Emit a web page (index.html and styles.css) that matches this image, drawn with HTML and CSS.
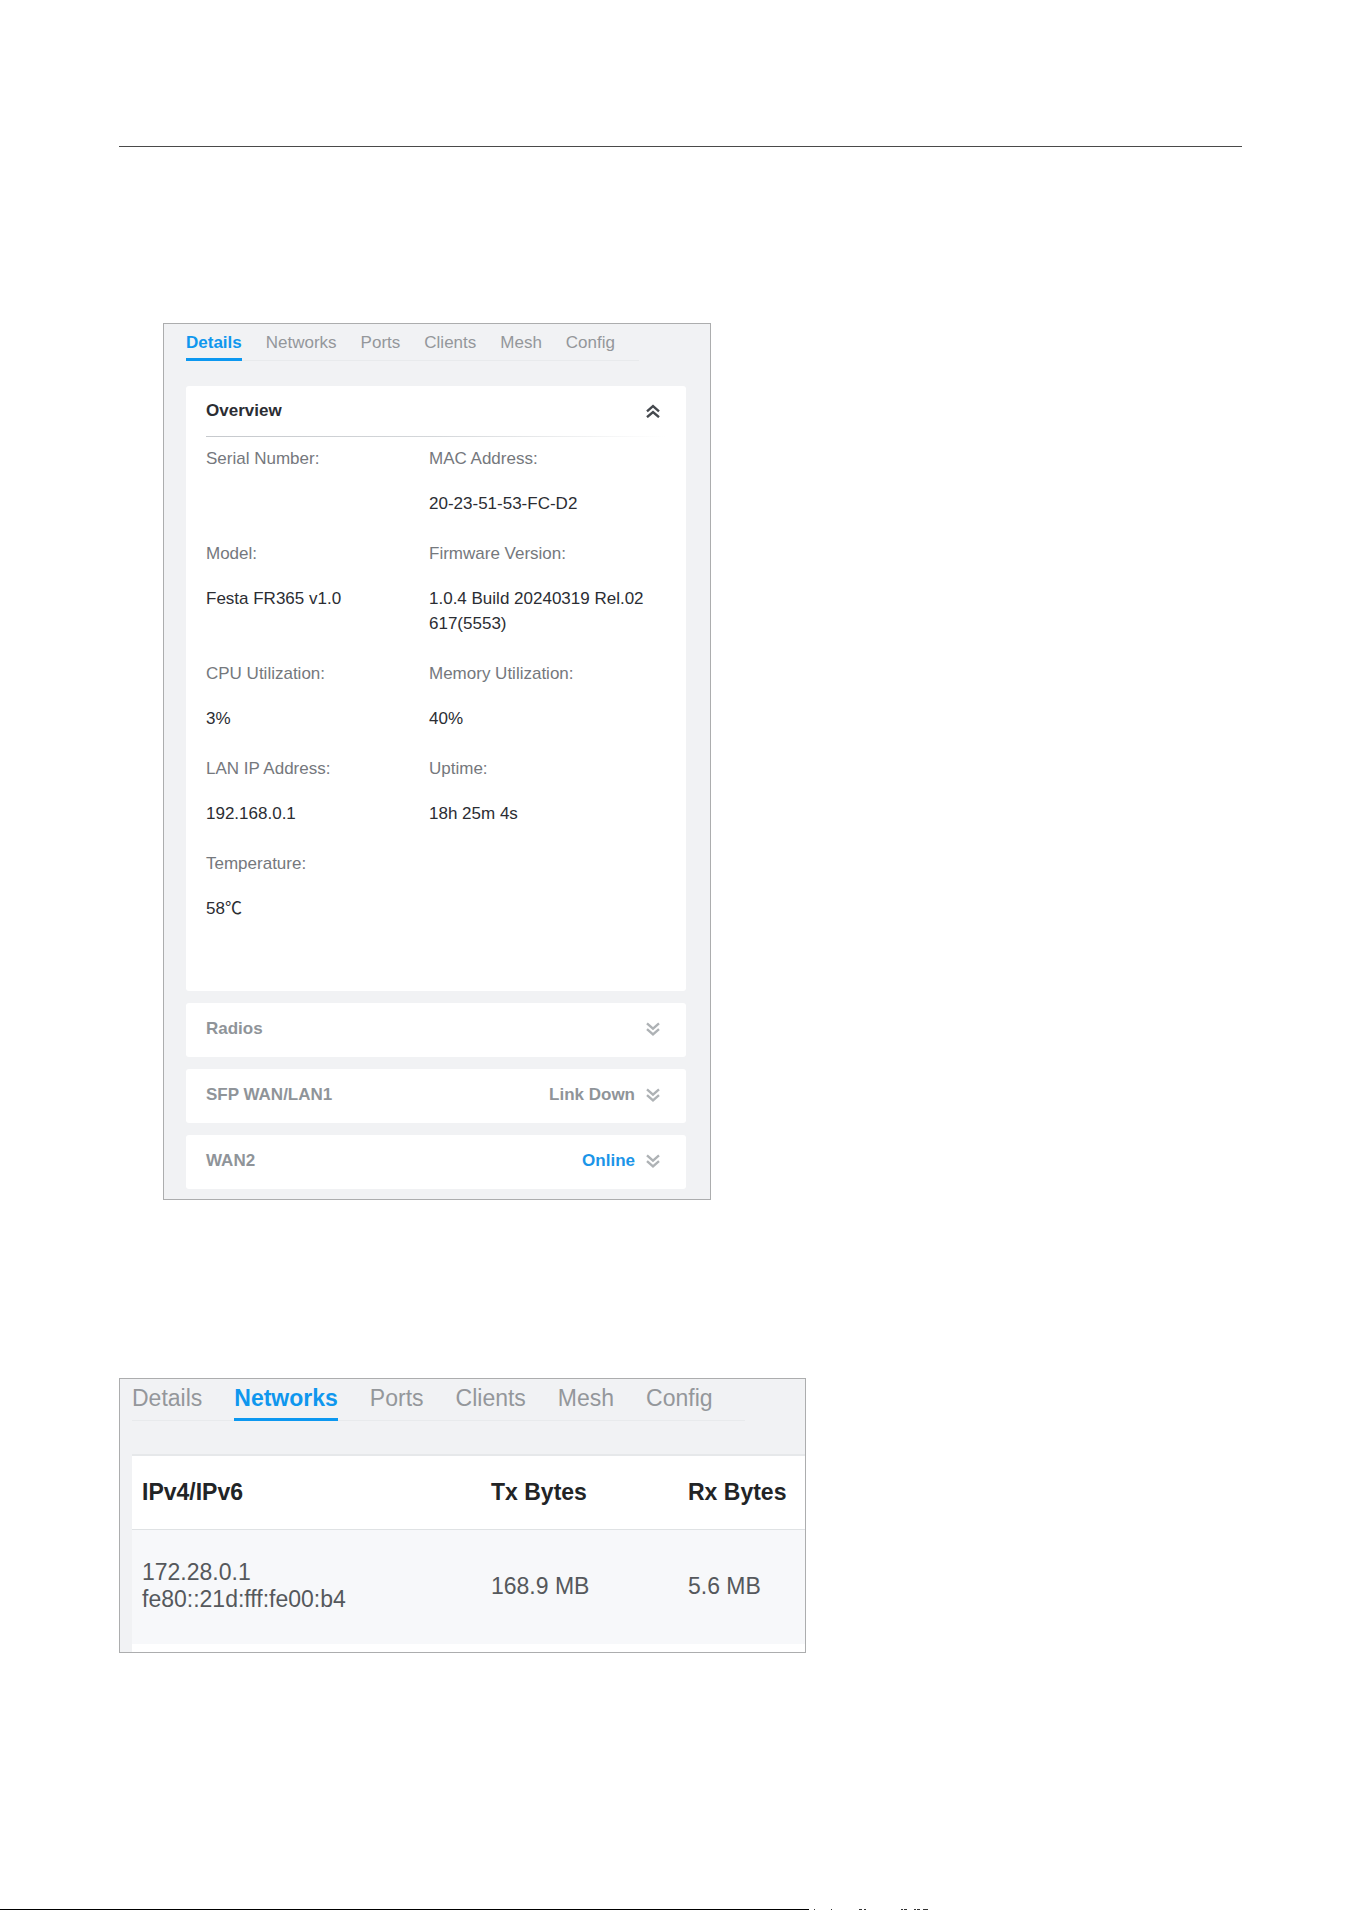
FILE: index.html
```html
<!DOCTYPE html>
<html lang="en">
<head>
<meta charset="utf-8">
<meta name="viewport" content="width=device-width, initial-scale=1">
<title>Device details</title>
<link rel="stylesheet" href="styles.css">
</head>
<body>
<header class="page-head"></header>
<main class="page-main">
  <section class="panel panel-details">
    <div class="tabs" role="tablist">
      <button class="tab active" role="tab" aria-selected="true">Details</button>
      <button class="tab" role="tab">Networks</button>
      <button class="tab" role="tab">Ports</button>
      <button class="tab" role="tab">Clients</button>
      <button class="tab" role="tab">Mesh</button>
      <button class="tab" role="tab">Config</button>
    </div>
    <div class="cards">
      <div class="card overview">
        <button class="card-head open" aria-expanded="true">
          <span class="card-title">Overview</span>
          <svg class="chevron" viewBox="0 0 14 14" aria-hidden="true"><path d="M1 7.4 7 2.2l6 5.2M1 13.2 7 8l6 5.2"/></svg>
        </button>
        <dl class="fields">
          <div class="field"><dt>Serial Number:</dt><dd></dd></div>
          <div class="field"><dt>MAC Address:</dt><dd>20-23-51-53-FC-D2</dd></div>
          <div class="field"><dt>Model:</dt><dd>Festa FR365 v1.0</dd></div>
          <div class="field"><dt>Firmware Version:</dt><dd>1.0.4 Build 20240319 Rel.02617(5553)</dd></div>
          <div class="field"><dt>CPU Utilization:</dt><dd>3%</dd></div>
          <div class="field"><dt>Memory Utilization:</dt><dd>40%</dd></div>
          <div class="field"><dt>LAN IP Address:</dt><dd>192.168.0.1</dd></div>
          <div class="field"><dt>Uptime:</dt><dd>18h 25m 4s</dd></div>
          <div class="field"><dt>Temperature:</dt><dd>58℃</dd></div>
        </dl>
      </div>
      <div class="card">
        <button class="card-head" aria-expanded="false">
          <span class="card-title">Radios</span>
          <svg class="chevron" viewBox="0 0 14 14" aria-hidden="true"><path d="m1 1.4 6 5.2 6-5.2M1 7.2l6 5.2 6-5.2"/></svg>
        </button>
      </div>
      <div class="card">
        <button class="card-head" aria-expanded="false">
          <span class="card-title">SFP WAN/LAN1</span>
          <span class="status">Link Down</span>
          <svg class="chevron" viewBox="0 0 14 14" aria-hidden="true"><path d="m1 1.4 6 5.2 6-5.2M1 7.2l6 5.2 6-5.2"/></svg>
        </button>
      </div>
      <div class="card">
        <button class="card-head" aria-expanded="false">
          <span class="card-title">WAN2</span>
          <span class="status online">Online</span>
          <svg class="chevron" viewBox="0 0 14 14" aria-hidden="true"><path d="m1 1.4 6 5.2 6-5.2M1 7.2l6 5.2 6-5.2"/></svg>
        </button>
      </div>
    </div>
  </section>

  <section class="panel panel-networks">
    <div class="tabs" role="tablist">
      <button class="tab" role="tab">Details</button>
      <button class="tab active" role="tab" aria-selected="true">Networks</button>
      <button class="tab" role="tab">Ports</button>
      <button class="tab" role="tab">Clients</button>
      <button class="tab" role="tab">Mesh</button>
      <button class="tab" role="tab">Config</button>
    </div>
    <table class="networks">
      <colgroup><col class="col-ip"><col class="col-tx"><col></colgroup>
      <thead>
        <tr><th scope="col">IPv4/IPv6</th><th scope="col">Tx Bytes</th><th scope="col">Rx Bytes</th></tr>
      </thead>
      <tbody>
        <tr><td>172.28.0.1<br>fe80::21d:fff:fe00:b4</td><td>168.9 MB</td><td>5.6 MB</td></tr>
      </tbody>
    </table>
  </section>
</main>
<footer class="page-foot">
  <div class="foot-line"></div>
  <svg class="foot-marks" viewBox="0 0 120 1" aria-hidden="true"><path d="M5 0h1v1H5zM22 0h1v1h-1zM50 0h3v1h-3zM55 0h2v1h-2zM92 0h2v1h-2zM95 0h3v1h-3zM105 0h2v1h-2zM108 0h3v1h-3zM114 0h5v1h-5z"/></svg>
</footer>
</body>
</html>
```
FILE: styles.css
```css
* {
  box-sizing: border-box;
}

body {
  margin: 0;
  min-height: 100vh;
  display: flex;
  flex-direction: column;
  background: #fff;
  color: #2b2d33;
  font-family: "Liberation Sans", Arial, "Noto Sans CJK SC", sans-serif;
  font-size: 17px;
  line-height: 24px;
}

button {
  margin: 0;
  padding: 0;
  border: 0;
  background: none;
  color: inherit;
  font: inherit;
  text-align: left;
  cursor: pointer;
}

.page-head {
  height: 147px;
  margin: 0 120px 0 119px;
  border-bottom: 1px solid #4a4a4a;
}

.page-main {
  padding: 176px 119px 80px;
}

.panel {
  max-width: 100%;
  border: 1px solid #acadae;
  background: #f1f2f4;
}

/* Tab strip */
.tabs {
  display: flex;
  width: fit-content;
  box-shadow: inset 0 -1px #e8eaec;
}

.tab {
  border-bottom: 3px solid transparent;
  color: #94979b;
}

.tab.active {
  border-bottom-color: #0c98f0;
  color: #0f97ee;
  font-weight: bold;
}

/* Details panel */
.panel-details {
  width: 548px;
  margin-left: 44px;
  padding: 7px 24px 10px 22px;
}

.panel-details .tabs {
  gap: 24px;
  padding-right: 24px;
}

.panel-details .tab {
  padding-bottom: 3px;
}

.cards {
  display: flex;
  flex-direction: column;
  gap: 12px;
  margin-top: 25px;
}

.card {
  border-radius: 3px;
  background: #fff;
}

.card-head {
  display: flex;
  align-items: center;
  gap: 11px;
  width: 100%;
  padding: 14px 26px 16px 20px;
  color: #8f9499;
  font-weight: bold;
}

.card-head.open {
  padding: 13px 26px 13px 20px;
  color: #2b2d33;
}

.card-title {
  flex: 1;
}

.status.online {
  color: #1b95e8;
}

.chevron {
  width: 14px;
  height: 14px;
  fill: none;
  stroke: #aeb2b5;
  stroke-width: 2.4;
}

.open .chevron {
  stroke: #45494e;
}

.overview {
  padding-bottom: 70px;
}

.fields {
  display: grid;
  grid-template-columns: 1fr 1fr;
  row-gap: 26px;
  margin: 0 20px;
  padding: 11px 14px 0 0;
  background: linear-gradient(to right, #c6c9cd, #d4d7da 50%, #fff) top / 100% 1px no-repeat;
}

.field {
  display: flex;
  flex-direction: column;
  gap: 20px;
}

.field dt {
  color: #75787d;
}

.field dd {
  min-height: 25px;
  margin: 0;
  line-height: 25px;
  word-break: break-all;
}

/* Networks panel */
.panel-networks {
  width: 687px;
  margin-top: 178px;
  padding: 5px 0 0 12px;
  font-size: 23px;
  line-height: 28px;
}

.panel-networks .tabs {
  gap: 32px;
  padding-right: 32px;
}

.panel-networks .tab {
  padding-bottom: 6px;
}

.networks {
  width: 100%;
  margin-top: 33px;
  border-top: 2px solid #e6e8ea;
  border-bottom: 8px solid #fff;
  border-spacing: 0;
  table-layout: fixed;
  background: #fff;
  text-align: left;
}

.col-ip {
  width: 349px;
}

.col-tx {
  width: 197px;
}

.networks th {
  padding: 22px 0 23px 10px;
  border-bottom: 1px solid #dfe2e4;
  color: #222426;
}

.networks td {
  padding: 29px 0 31px 10px;
  background: #f7f8fa;
  color: #55585c;
  line-height: 27px;
}

/* Footer strip */
.page-foot {
  display: flex;
  height: 1px;
  margin-top: auto;
}

.foot-line {
  width: 59.4%;
  background: #000;
}

.foot-marks {
  width: 120px;
  height: 1px;
  fill: #333;
}
```
